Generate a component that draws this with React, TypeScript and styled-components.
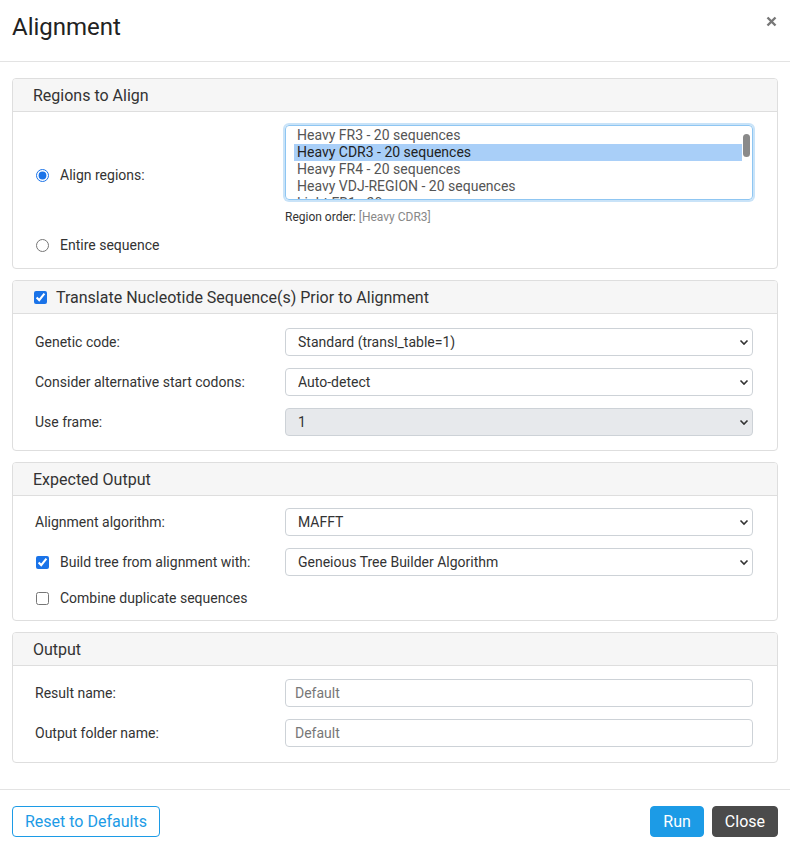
import React from "react";
import styled, { createGlobalStyle } from "styled-components";

const Global = createGlobalStyle`
  html, body { margin: 0; padding: 0; background: #fff; }
  body { font-family: Roboto, "Liberation Sans", Arial, sans-serif; color: #333; width: 790px; }
  * { box-sizing: border-box; }
`;

const Modal = styled.div`
  display: flex;
  flex-direction: column;
  width: 790px;
`;

const Header = styled.div`
  display: flex;
  justify-content: space-between;
  align-items: flex-start;
  padding: 12px 12px 19px 12px;
  border-bottom: 1px solid #e3e3e3;
`;

const Title = styled.h1`
  margin: 0;
  font-size: 24px;
  font-weight: 400;
  line-height: 30px;
  color: #222;
`;

const CloseX = styled.button`
  border: none;
  background: none;
  padding: 0;
  margin: 2px 0 0 0;
  width: 14px;
  height: 14px;
  display: flex;
  align-items: center;
  justify-content: center;
  cursor: pointer;
`;

const Body = styled.div`
  display: flex;
  flex-direction: column;
  gap: 11px;
  padding: 16px 12px 26px;
  border-bottom: 1px solid #e3e3e3;
`;

const Panel = styled.section`
  border: 1px solid #dedede;
  border-radius: 4px;
  overflow: hidden;
`;

const PanelHead = styled.div`
  display: flex;
  align-items: center;
  gap: 9px;
  height: 33px;
  padding: 0 20px;
  background: #f6f6f6;
  border-bottom: 1px solid #dedede;
  font-size: 16px;
  color: #333;
`;

const PanelBody = styled.div<{ $pt?: number; $pb?: number; $gap?: number }>`
  display: grid;
  grid-template-columns: 250px 1fr;
  row-gap: ${(p) => p.$gap ?? 12}px;
  padding: ${(p) => p.$pt ?? 14}px 24px ${(p) => p.$pb ?? 15}px 22px;
`;

const Label = styled.label<{ $span?: boolean }>`
  display: flex;
  align-items: center;
  gap: 11px;
  font-size: 14px;
  color: #333;
  min-height: 28px;
  ${(p) => (p.$span ? "grid-column: 1 / span 2; min-height: 20px;" : "")}
`;

const Check = styled.input`
  margin: 0 0 0 1px;
  width: 13px;
  height: 13px;
  accent-color: #1a73e8;
`;

const SelectWrap = styled.div`
  position: relative;
  height: 28px;
`;

const Select = styled.select<{ $disabled?: boolean }>`
  appearance: none;
  width: 100%;
  height: 28px;
  padding: 0 30px 0 12px;
  border: 1px solid #cdd2d7;
  border-radius: 4px;
  background: ${(p) => (p.$disabled ? "#e7e9ec" : "#fff")};
  font-family: Roboto, "Liberation Sans", Arial, sans-serif;
  font-size: 14px;
  color: #333;
  opacity: 1;
`;

const Chevron = styled.svg`
  position: absolute;
  right: 4px;
  top: 10px;
  pointer-events: none;
`;

const TextInput = styled.input`
  width: 100%;
  height: 28px;
  padding: 0 9px;
  border: 1px solid #cdd2d7;
  border-radius: 4px;
  font-family: Roboto, "Liberation Sans", Arial, sans-serif;
  font-size: 14px;
  color: #333;
  &::placeholder { color: #777; }
`;

const ListCol = styled.div`
  display: flex;
  flex-direction: column;
  gap: 10px;
`;

const ListBox = styled.div`
  position: relative;
  height: 75px;
  border: 1px solid #8fc6f2;
  border-radius: 4px;
  box-shadow: 0 0 0 2px #c9e3f8;
  padding: 1px 10px 0 8px;
  overflow: hidden;
`;

const Option = styled.div<{ $selected?: boolean }>`
  height: 17px;
  line-height: 17px;
  padding-left: 3px;
  font-size: 14px;
  color: ${(p) => (p.$selected ? "#222" : "#555")};
  background: ${(p) => (p.$selected ? "#a9cff8" : "transparent")};
  white-space: nowrap;
`;

const Thumb = styled.div`
  position: absolute;
  right: 2px;
  top: 8px;
  width: 7px;
  height: 23px;
  border-radius: 4px;
  background: #8a8a8a;
`;

const OrderText = styled.div`
  font-size: 12px;
  line-height: 15px;
  color: #333;
`;

const OrderValue = styled.span`
  color: #888;
`;

const Footer = styled.div`
  display: flex;
  align-items: center;
  padding: 16px 12px;
`;

const Spacer = styled.div`
  flex: 1;
`;

const Btn = styled.button<{ $variant: "outline" | "primary" | "dark" }>`
  height: 31px;
  padding: 0 12px;
  border-radius: 4px;
  font-family: Roboto, "Liberation Sans", Arial, sans-serif;
  font-size: 16px;
  cursor: pointer;
  border: 1px solid
    ${(p) => (p.$variant === "outline" ? "#1c9be6" : p.$variant === "primary" ? "#1c9be6" : "#4b4b4b")};
  background: ${(p) => (p.$variant === "outline" ? "#fff" : p.$variant === "primary" ? "#1c9be6" : "#4b4b4b")};
  color: ${(p) => (p.$variant === "outline" ? "#1c9be6" : "#fff")};
  & + & { margin-left: 8px; }
`;

const ChevronIcon = () => (
  <Chevron width="10" height="8" viewBox="0 0 10 8">
    <path d="M1.5 2.5 L5 6 L8.5 2.5" fill="none" stroke="#333" strokeWidth="1.6" />
  </Chevron>
);

const SelectField = ({ value, disabled }: { value: string; disabled?: boolean }) => (
  <SelectWrap>
    <Select $disabled={disabled} defaultValue={value}>
      <option>{value}</option>
    </Select>
    <ChevronIcon />
  </SelectWrap>
);

const options = [
  "Heavy FR3 - 20 sequences",
  "Heavy CDR3 - 20 sequences",
  "Heavy FR4 - 20 sequences",
  "Heavy VDJ-REGION - 20 sequences",
  "Light FR1 - 20 sequences",
];

export default function App() {
  return (
    <Modal>
      <Global />
      <Header>
        <Title>Alignment</Title>
        <CloseX aria-label="Close">
          <svg width="11" height="11" viewBox="0 0 11 11">
            <path d="M1.5 1.5 L9.5 9.5 M9.5 1.5 L1.5 9.5" stroke="#777" strokeWidth="2.4" />
          </svg>
        </CloseX>
      </Header>
      <Body>
        <Panel>
          <PanelHead>Regions to Align</PanelHead>
          <PanelBody $pt={13} $pb={13} $gap={10}>
            <Label>
              <Check type="radio" name="r" defaultChecked />
              Align regions:
            </Label>
            <ListCol>
              <ListBox>
                {options.map((o, i) => (
                  <Option key={o} $selected={i === 1}>
                    {o}
                  </Option>
                ))}
                <Thumb />
              </ListBox>
              <OrderText>
                Region order: <OrderValue>[Heavy CDR3]</OrderValue>
              </OrderText>
            </ListCol>
            <Label $span>
              <Check type="radio" name="r" />
              Entire sequence
            </Label>
          </PanelBody>
        </Panel>

        <Panel>
          <PanelHead>
            <Check type="checkbox" defaultChecked />
            Translate Nucleotide Sequence(s) Prior to Alignment
          </PanelHead>
          <PanelBody $pt={14} $pb={14}>
            <Label>Genetic code:</Label>
            <SelectField value="Standard (transl_table=1)" />
            <Label>Consider alternative start codons:</Label>
            <SelectField value="Auto-detect" />
            <Label>Use frame:</Label>
            <SelectField value="1" disabled />
          </PanelBody>
        </Panel>

        <Panel>
          <PanelHead>Expected Output</PanelHead>
          <PanelBody $pt={12} $pb={12}>
            <Label>Alignment algorithm:</Label>
            <SelectField value="MAFFT" />
            <Label>
              <Check type="checkbox" defaultChecked />
              Build tree from alignment with:
            </Label>
            <SelectField value="Geneious Tree Builder Algorithm" />
            <Label $span>
              <Check type="checkbox" />
              Combine duplicate sequences
            </Label>
          </PanelBody>
        </Panel>

        <Panel>
          <PanelHead>Output</PanelHead>
          <PanelBody $pt={13} $pb={15}>
            <Label>Result name:</Label>
            <TextInput placeholder="Default" />
            <Label>Output folder name:</Label>
            <TextInput placeholder="Default" />
          </PanelBody>
        </Panel>
      </Body>
      <Footer>
        <Btn $variant="outline">Reset to Defaults</Btn>
        <Spacer />
        <Btn $variant="primary">Run</Btn>
        <Btn $variant="dark">Close</Btn>
      </Footer>
    </Modal>
  );
}
